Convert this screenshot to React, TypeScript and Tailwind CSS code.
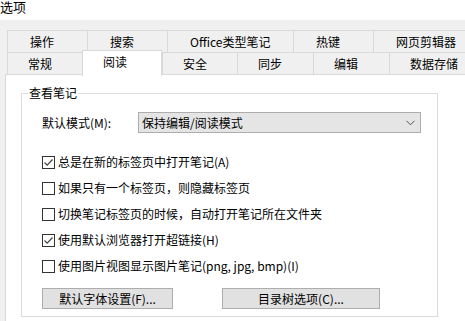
import React from "react";

const row1 = [
  { label: "操作", w: "w-[80px]" },
  { label: "搜索", w: "w-[80px]" },
  { label: "Office类型笔记", w: "w-[126px]" },
  { label: "热键", w: "w-[80px]" },
  { label: "网页剪辑器", w: "flex-1" },
];

const row2 = [
  { label: "常规", w: "w-[75px]" },
  { label: "阅读", w: "w-[80px]", active: true },
  { label: "安全", w: "w-[75px]" },
  { label: "同步", w: "w-[76px]" },
  { label: "编辑", w: "w-[76px]" },
  { label: "数据存储", w: "flex-1" },
];

const options = [
  { label: "总是在新的标签页中打开笔记(A)", checked: true },
  { label: "如果只有一个标签页，则隐藏标签页", checked: false },
  { label: "切换笔记标签页的时候，自动打开笔记所在文件夹", checked: false },
  { label: "使用默认浏览器打开超链接(H)", checked: true },
  { label: "使用图片视图显示图片笔记(png, jpg, bmp)(I)", checked: false },
];

const CheckBox = ({ checked }: { checked: boolean }) => (
  <span className="w-[13px] h-[13px] border border-[#333333] bg-white flex items-center justify-center shrink-0">
    {checked && (
      <svg width="11" height="11" viewBox="0 0 11 11">
        <path d="M1.5 5.5 L4.2 8.2 L9.5 2.5" fill="none" stroke="#444444" strokeWidth="1.2" />
      </svg>
    )}
  </span>
);

export default function App() {
  return (
    <div className="w-[465px] h-[321px] overflow-hidden bg-white flex flex-col font-['Noto_Sans_CJK_SC',sans-serif] text-[12px] text-black">
      <div className="h-[20px] bg-white shrink-0">
        <span className="block text-[13px] leading-[13px] pl-[0px]">选项</span>
      </div>

      <div className="flex-1 bg-[#f0f0f0] pt-[10px] pl-[5px] flex flex-col">
        {/* tab rows */}
        <div className="pl-[2px]">
          <div className="flex h-[22px]">
            {row1.map((t) => (
              <div
                key={t.label}
                className={`${t.w} border-t border-l border-[#d9d9d9] pl-[22px] flex items-center leading-none`}
              >
                {t.label}
              </div>
            ))}
          </div>
          <div className="flex h-[22px] border-t border-[#d9d9d9]">
            {row2.map((t) =>
              t.active ? (
                <div
                  key={t.label}
                  className={`${t.w} bg-white border-t border-l border-r border-[#d9d9d9] -mt-[3px] h-[26px] pl-[20px] pb-[4px] flex items-center leading-none relative z-10`}
                >
                  {t.label}
                </div>
              ) : (
                <div
                  key={t.label}
                  className={`${t.w} border-l border-[#d9d9d9] pl-[20px] flex items-center leading-none`}
                >
                  {t.label}
                </div>
              )
            )}
          </div>
        </div>

        {/* panel */}
        <div className="flex-1 bg-white border-l border-t border-[#d9d9d9] pt-[18px] pl-[15px]">
          <div className="relative w-[417px] h-[224px] border border-[#dcdcdc] pt-[18px] pl-[20px]">
            <span className="absolute left-[6px] -top-[7px] bg-white px-[1px] leading-[12px]">查看笔记</span>

            <div className="flex items-center h-[21px]">
              <span className="w-[96px] leading-none">默认模式(M):</span>
              <div className="w-[283px] h-[21px] bg-[#e5e5e5] border border-[#adadad] flex items-center justify-between pl-[3px] pr-[5px]">
                <span className="leading-none">保持编辑/阅读模式</span>
                <svg width="9" height="6" viewBox="0 0 9 6">
                  <path d="M0.5 0.8 L4.5 4.8 L8.5 0.8" fill="none" stroke="#555555" strokeWidth="1" />
                </svg>
              </div>
            </div>

            <div className="mt-[16px] flex flex-col">
              {options.map((o) => (
                <div key={o.label} className="h-[26px] flex items-center gap-[3px]">
                  <CheckBox checked={o.checked} />
                  <span className="leading-none whitespace-nowrap">{o.label}</span>
                </div>
              ))}
            </div>

            <div className="mt-[9px] flex gap-[49px]">
              <div className="w-[131px] h-[21px] bg-[#e1e1e1] border border-[#adadad] flex items-center justify-center leading-none">
                默认字体设置(F)...
              </div>
              <div className="w-[158px] h-[21px] bg-[#e1e1e1] border border-[#adadad] flex items-center justify-center leading-none">
                目录树选项(C)...
              </div>
            </div>
          </div>
        </div>
      </div>
    </div>
  );
}
